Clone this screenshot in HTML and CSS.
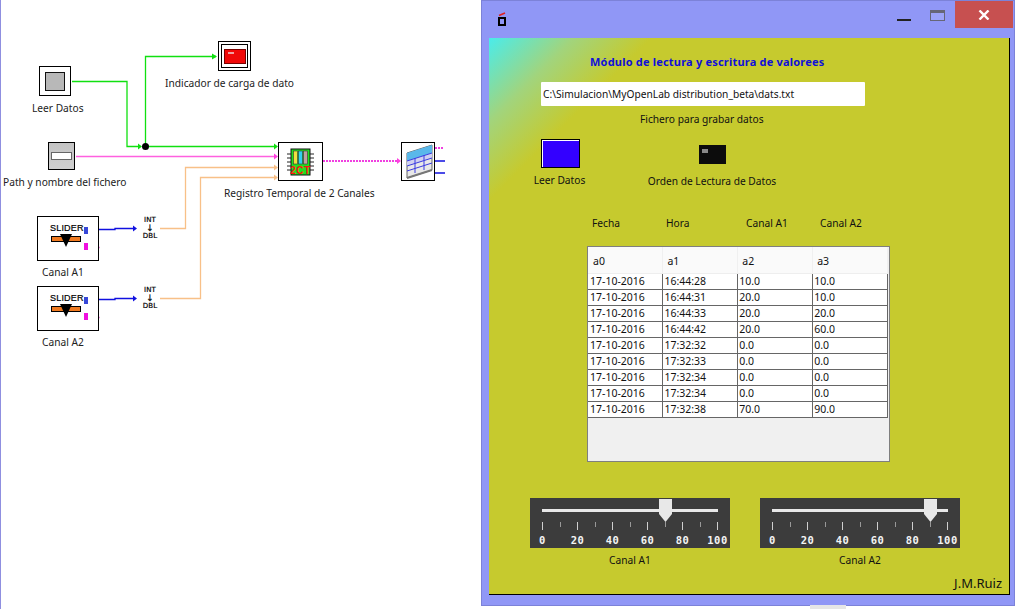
FILE: index.html
```html
<!DOCTYPE html>
<html lang="es">
<head>
<meta charset="utf-8">
<title>Módulo de lectura y escritura</title>
<link rel="stylesheet" href="styles.css">
</head>
<body>
<div class="desktop">
  <section class="diagram">
    <svg class="wires" width="480" height="609" viewBox="0 0 480 609">
      <g fill="none" stroke-width="1.3">
        <path class="g" d="M72 81.500H127V146.500H140"/>
        <path class="g" d="M145.500 146.500V56.500H216"/>
        <path class="g" d="M146 146.500H276"/>
        <path class="p" d="M76 156.500H276"/>
        <path class="o" d="M160 228.500H185.500V167.500H276"/>
        <path class="o" d="M160 298.500H200.500V177.500H276"/>
        <path class="b" d="M92 229.500H115V228.500H135"/>
        <path class="b" d="M92 299.500H115V298.500H135"/>
        <path class="d" d="M323 161H398"/>
        <path class="d" d="M435 148H443"/>
        <path class="b" d="M435 161H445M435 173H445"/>
        <path class="pt" d="M92 247.500H100M92 317.500H100"/>
      </g>
      <circle cx="145.500" cy="146.500" r="3.500" fill="#000"/>
      <path class="ag" d="M138 143.500l4 3-4 3zM212 53.500l5 3-5 3zM274 143.500l4 3-4 3z"/>
      <path class="ap" d="M274 153.500l4 3-4 3zM397 158l4 3-4 3z"/>
      <path class="ao" d="M274 164.500l4 3-4 3zM274 174.500l4 3-4 3z"/>
      <path class="ab" d="M133 225.500l4 3-4 3zM133 295.500l4 3-4 3z"/>
    </svg>

    <div class="node n-leer"><span class="leer-inner"></span></div>
    <div class="node n-ind"><span class="ind-inner"><span class="ind-red"><span class="ind-spot"></span></span></span></div>
    <div class="node n-path"><span class="path-field"></span></div>

    <div class="node n-reg">
      <svg width="42" height="37" viewBox="0 0 42 37">
        <path d="M8 11h4M8 15h4M8 19h4M8 23h4M8 27h4M31 11h4M31 15h4M31 19h4M31 23h4M31 27h4" stroke="#222"/>
        <rect x="12" y="6" width="19" height="26" fill="#20e020" stroke="#111"/>
        <rect x="14.500" y="8" width="4" height="13" fill="#f0e040" stroke="#333" stroke-width=".6"/>
        <rect x="19.500" y="8" width="4" height="13" fill="#30d0f0" stroke="#333" stroke-width=".6"/>
        <rect x="24.500" y="8" width="4" height="13" fill="#c0a0a0" stroke="#333" stroke-width=".6"/>
        <text x="21.500" y="31" class="chip-text">2CT</text>
      </svg>
    </div>

    <div class="node n-table">
      <svg width="32" height="37" viewBox="0 0 32 37">
        <path d="M5 10 30 2V27L5 35Z" fill="#e8e8e8" stroke="#666"/>
        <path d="M5 10 30 2V10L5 18Z" fill="#5ab8ea"/>
        <path d="M5 18 30 10V15L5 23Z" fill="#d0d0f0"/>
        <path d="M5 18 30 10M5 23 30 15M5 28 30 20M13 15V30M22 12V27" stroke="#3a3ae0" fill="none"/>
        <path d="M5 35 30 27" stroke="#777" stroke-width="2"/>
      </svg>
    </div>

    <div class="node n-slider n-s1">
      <span class="sl-name">SLIDER</span>
      <span class="sl-bar"></span><span class="sl-tri"></span>
      <span class="pin pin-b"></span><span class="pin pin-m"></span>
    </div>
    <div class="node n-slider n-s2">
      <span class="sl-name">SLIDER</span>
      <span class="sl-bar"></span><span class="sl-tri"></span>
      <span class="pin pin-b"></span><span class="pin pin-m"></span>
    </div>

    <div class="conv c1"><span>INT</span><span class="arr">↓</span><span>DBL</span></div>
    <div class="conv c2"><span>INT</span><span class="arr">↓</span><span>DBL</span></div>

    <span class="lbl l-leer">Leer Datos</span>
    <span class="lbl l-ind">Indicador de carga de dato</span>
    <span class="lbl l-path">Path y nombre del fichero</span>
    <span class="lbl l-reg">Registro Temporal de 2 Canales</span>
    <span class="lbl l-a1">Canal A1</span>
    <span class="lbl l-a2">Canal A2</span>
  </section>

  <section class="window">
    <header class="titlebar">
      <svg class="app-icon" width="10" height="14" viewBox="0 0 10 14">
        <path d="M2 3.500 8 1" stroke="#e02020" stroke-width="1.600"/>
        <rect x="2" y="6" width="6" height="7" fill="none" stroke="#000" stroke-width="2"/>
      </svg>
      <span class="btn-min"></span>
      <span class="btn-max"></span>
      <span class="btn-close">
        <svg width="12" height="10" viewBox="0 0 12 10"><path d="M1.500 .5 10.500 9.500M10.500 .5 1.500 9.500" stroke="#fff" stroke-width="2.400"/></svg>
      </span>
    </header>
    <main class="panel">
      <h1 class="title">Módulo de lectura y escritura de valorees</h1>
      <div class="path-input">C:\Simulacion\MyOpenLab distribution_beta\dats.txt</div>
      <p class="caption">Fichero para grabar datos</p>
      <div class="controls">
        <div class="ctl-left">
          <span class="blue-btn"></span>
          <span class="txt">Leer Datos</span>
        </div>
        <div class="ctl-right">
          <span class="led"><span class="led-spot"></span></span>
          <span class="txt">Orden de Lectura de Datos</span>
        </div>
      </div>
      <div class="col-heads">
        <span class="h-fecha">Fecha</span><span class="h-hora">Hora</span><span class="h-a1">Canal A1</span><span class="h-a2">Canal A2</span>
      </div>
      <div class="tbl-wrap">
        <table class="tbl">
          <thead><tr><th>a0</th><th>a1</th><th>a2</th><th>a3</th></tr></thead>
          <tbody>
            <tr><td>17-10-2016</td><td>16:44:28</td><td>10.0</td><td>10.0</td></tr>
            <tr><td>17-10-2016</td><td>16:44:31</td><td>20.0</td><td>10.0</td></tr>
            <tr><td>17-10-2016</td><td>16:44:33</td><td>20.0</td><td>20.0</td></tr>
            <tr><td>17-10-2016</td><td>16:44:42</td><td>20.0</td><td>60.0</td></tr>
            <tr><td>17-10-2016</td><td>17:32:32</td><td>0.0</td><td>0.0</td></tr>
            <tr><td>17-10-2016</td><td>17:32:33</td><td>0.0</td><td>0.0</td></tr>
            <tr><td>17-10-2016</td><td>17:32:34</td><td>0.0</td><td>0.0</td></tr>
            <tr><td>17-10-2016</td><td>17:32:34</td><td>0.0</td><td>0.0</td></tr>
            <tr><td>17-10-2016</td><td>17:32:38</td><td>70.0</td><td>90.0</td></tr>
          </tbody>
        </table>
      </div>
      <div class="sliders">
        <div class="slider-box">
          <div class="slider">
            <span class="track"></span>
            <span class="thumb" style="left:129px"><svg width="14" height="24" viewBox="0 0 14 24"><path d="M0 0H13V15L6.500 23 0 15Z" fill="#e8e8e8"/></svg></span>
            <div class="ticks"><i></i><i class="mn"></i><i></i><i class="mn"></i><i></i><i class="mn"></i><i></i><i class="mn"></i><i></i><i class="mn"></i><i></i></div>
            <div class="nums"><span>0</span><span>20</span><span>40</span><span>60</span><span>80</span><span>100</span></div>
          </div>
          <span class="txt">Canal A1</span>
        </div>
        <div class="slider-box">
          <div class="slider">
            <span class="track"></span>
            <span class="thumb" style="left:164px"><svg width="14" height="24" viewBox="0 0 14 24"><path d="M0 0H13V15L6.500 23 0 15Z" fill="#e8e8e8"/></svg></span>
            <div class="ticks"><i></i><i class="mn"></i><i></i><i class="mn"></i><i></i><i class="mn"></i><i></i><i class="mn"></i><i></i><i class="mn"></i><i></i></div>
            <div class="nums"><span>0</span><span>20</span><span>40</span><span>60</span><span>80</span><span>100</span></div>
          </div>
          <span class="txt">Canal A2</span>
        </div>
      </div>
      <div class="author">J.M.Ruiz</div>
    </main>
  </section>
  <span class="stray"></span>
</div>
</body>
</html>
```
FILE: styles.css
```css
* { box-sizing: border-box; }
html, body { margin: 0; padding: 0; }
body {
  width: 1020px; height: 609px; overflow: hidden; background: #fff;
  font-family: "Noto Sans", "DejaVu Sans", sans-serif; font-size: 10.200px; color: #111;
}
.desktop { position: relative; width: 1020px; height: 609px; }
.stray { position: absolute; left: 810px; top: 605px; width: 36px; height: 4px; background: #e6e6e6; }

/* diagram canvas */
.diagram { position: absolute; left: 0; top: 0; width: 480px; height: 609px; border-left: 1px solid #8f8fe0; }
.wires { position: absolute; left: -1px; top: 0; }
.g { stroke: #10e010; }
.p { stroke: #ff60e0; }
.o { stroke: #f8c088; }
.b { stroke: #1010e0; }
.d { stroke: #f040e0; stroke-dasharray: 2 1; stroke-width: 2; }
.pt { stroke: #f090e0; }
.ag { fill: #10e010; } .ap { fill: #ff40e0; } .ao { fill: #f8c088; } .ab { fill: #1010e0; }

.node { position: absolute; border: 1px solid #000; background: #fff; }
.n-leer { left: 38px; top: 66px; width: 32px; height: 30px; display: flex; align-items: center; justify-content: center; }
.leer-inner { width: 20px; height: 19px; background: #b8b8b8; border: 1px solid #111; }
.n-ind { left: 217px; top: 41px; width: 33px; height: 30px; display: flex; align-items: center; justify-content: center; }
.ind-inner { width: 27px; height: 24px; border: 1px solid #000; display: flex; align-items: center; justify-content: center; }
.ind-red { width: 22px; height: 15px; background: #f00808; border: 1px solid #700; padding: 2px 3px; }
.ind-spot { display: block; width: 6px; height: 2px; background: #f0a0a0; }
.n-path { left: 47px; top: 142px; width: 27px; height: 28px; background: linear-gradient(#c4c4c4, #cfcfcf); display: flex; align-items: center; justify-content: center; }
.path-field { width: 21px; height: 8px; background: #fff; border: 1px solid #666; }
.n-reg { left: 277px; top: 142px; width: 45px; height: 39px; }
.n-reg svg, .n-table svg { display: block; }
.chip-text { font: bold 10px "Liberation Sans", sans-serif; fill: #ff1010; text-anchor: middle; letter-spacing: .5px; }
.n-table { left: 400px; top: 142px; width: 34px; height: 39px; }
.n-slider { width: 62px; height: 45px; left: 36px; }
.n-s1 { top: 216px; } .n-s2 { top: 286px; }
.sl-name { position: absolute; left: 12px; top: 6px; font: 9px/10px "Liberation Sans", sans-serif; letter-spacing: .2px; color: #000; -webkit-text-stroke: .2px #000; }
.sl-bar { position: absolute; left: 13px; top: 19px; width: 30px; height: 6px; background: #f07a20; border: 1px solid #000; }
.sl-tri { position: absolute; left: 22px; top: 17px; width: 0; height: 0; border-left: 6px solid transparent; border-right: 6px solid transparent; border-top: 13px solid #000; }
.pin { position: absolute; left: 46px; width: 4px; height: 7px; }
.pin-b { top: 10px; background: #3848d8; }
.pin-m { top: 26px; background: #f010e0; }
.conv { position: absolute; left: 137px; width: 24px; display: flex; flex-direction: column; align-items: center; font: 7px/8px "DejaVu Sans", sans-serif; letter-spacing: .2px; color: #000; -webkit-text-stroke: .2px #000; }
.conv .arr { font: 9px/8px "DejaVu Sans", sans-serif; }
.c1 { top: 216px; } .c2 { top: 286px; }
.lbl { position: absolute; white-space: nowrap; line-height: 14px; color: #222; }
.l-leer { left: 31px; top: 101px; }
.l-ind { left: 164px; top: 76px; }
.l-path { left: 2px; top: 175px; }
.l-reg { left: 223px; top: 186px; }
.l-a1 { left: 41px; top: 265px; }
.l-a2 { left: 41px; top: 335px; }

/* window */
.window {
  position: absolute; left: 481px; top: 0; width: 534px; height: 606px;
  background: #9097f6; border: 1px solid #7c82d8; display: flex; flex-direction: column;
}
.titlebar { height: 37px; flex: none; display: flex; align-items: flex-start; position: relative; }
.app-icon { margin: 11px 0 0 15px; }
.btn-min { margin: 18px 0 0 390px; width: 14px; height: 2px; background: #222; }
.btn-max { margin: 9px 0 0 19px; width: 15px; height: 11px; border: 1px solid #667; border-top-width: 3px; background: #9ca3f8; }
.btn-close { margin: 0 0 0 10px; width: 58px; height: 27px; background: #c75050; display: flex; align-items: center; justify-content: center; }
.panel {
  margin-left: 7px; width: 521px; height: 557px; position: relative;
  background: linear-gradient(135deg, #4aeceb 0, #a2d47c 60px, #c6ca2e 115px);
  border-right: 1px solid #000; border-bottom: 1px solid #000;
  display: flex; flex-direction: column; color: #111;
}
.title { margin: 17px 0 0 101px; font: bold 11px/14px "Noto Sans", sans-serif; color: #1010d8; white-space: nowrap; letter-spacing: .2px; }
.path-input { margin: 13px 0 0 52px; width: 324px; height: 24px; line-height: 24px; padding-left: 2px; background: #fff; border-radius: 1px; white-space: nowrap; }
.caption { margin: 6px 0 0 151px; line-height: 14px; white-space: nowrap; }
.controls { display: flex; margin-top: 13px; height: 56px; }
.txt { line-height: 14px; white-space: nowrap; }
.ctl-left { margin-left: 44px; width: 53px; display: flex; flex-direction: column; align-items: center; }
.blue-btn { width: 39px; height: 29px; margin-left: 2px; background: #3300ff; border: 1px solid #000; box-shadow: inset 0 1px 0 #fff, inset 1px 0 0 #fff; margin-bottom: 5px; }
.ctl-right { margin-left: 61px; width: 130px; display: flex; flex-direction: column; align-items: center; padding-top: 6px; }
.led { width: 27px; height: 19px; background: #0c0c0c; padding: 4px 3px; margin-bottom: 10px; }
.led-spot { display: block; width: 6px; height: 4px; background: #888; }
.col-heads { position: relative; display: flex; margin: 21px 0 0 103px; height: 14px; line-height: 14px; }
.h-fecha { width: 74px; } .h-hora { width: 80px; } .h-a1 { width: 74px; }
.tbl-wrap { margin: 16px 0 0 98px; width: 303px; height: 216px; background: #f0f0f0; border: 1px solid #7f7f7f; }
.tbl { border-collapse: collapse; table-layout: fixed; width: 300px; font-size: 10.500px; }
.tbl th { height: 26px; background: #fafafa; font-weight: normal; text-align: left; padding: 2px 0 0 5px; border-right: 1px solid #f0f0f0; border-bottom: 1px solid #eee; }
.tbl th + th { padding-left: 4px; }
.tbl td { height: 16px; padding: 0 0 0 1px; background: #fff; border: 1px solid #666; border-top: 0; line-height: 14px; overflow: hidden; white-space: nowrap; }
.tbl td:first-child { border-left: 0; padding-left: 2px; }
.sliders { display: flex; margin: 36px 0 0 41px; gap: 30px; }
.slider-box { width: 200px; display: flex; flex-direction: column; align-items: center; }
.slider { position: relative; width: 200px; height: 50px; background: #3c3c3c; margin-bottom: 5px; padding: 0 12px; }
.track { position: absolute; left: 12px; top: 11px; width: 176px; height: 3px; background: #e8e8e8; }
.thumb { position: absolute; top: 1px; width: 14px; height: 24px; }
.thumb svg { display: block; }
.ticks { display: flex; justify-content: space-between; padding-top: 24px; width: 176px; height: 32px; }
.ticks i { display: block; width: 1px; height: 8px; background: #cfcfcf; }
.ticks i.mn { height: 5px; background: #999; }
.nums { display: grid; grid-template-columns: repeat(6, 35px); justify-items: center; width: 210px; margin: 3px 0 0 -17px; font: bold 10.500px/14px "DejaVu Sans Mono", monospace; color: #f4f4f4; letter-spacing: .5px; }
.author { position: absolute; right: 7px; bottom: 4px; font-size: 13px; line-height: 14px; }
```
